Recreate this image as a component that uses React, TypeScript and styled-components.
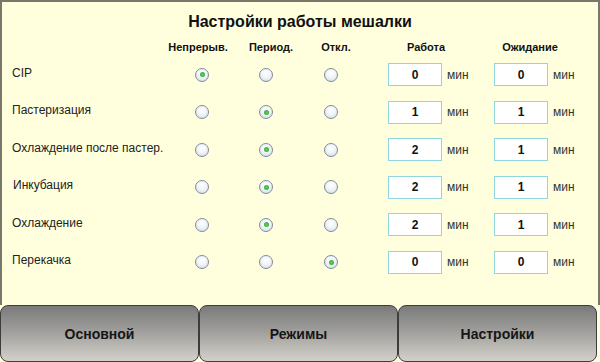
import React from "react";
import styled, { createGlobalStyle } from "styled-components";

const Global = createGlobalStyle`
  html, body { margin: 0; padding: 0; background: #ffffdd; }
  body { font-family: Arial, "Liberation Sans", sans-serif; }
`;

const Frame = styled.div`
  width: 600px;
  height: 362px;
  display: flex;
  flex-direction: column;
  background: #ffffdd;
  overflow: hidden;
`;

const Panel = styled.div`
  height: 305px;
  box-sizing: border-box;
  border: 2px solid #77776a;
  border-bottom: none;
  display: flex;
  flex-direction: column;
`;

const Title = styled.div`
  height: 36px;
  padding-top: 11px;
  box-sizing: border-box;
  text-align: center;
  font-weight: bold;
  font-size: 16px;
  color: #111;
  line-height: 18px;
`;

const Grid = styled.div`
  display: grid;
  grid-template-columns: 168px 62px 68px 60px 28px 54px 52px 54px 1fr;
  grid-template-rows: 17px repeat(6, 37.5px);
  align-items: center;
`;

const Head = styled.div<{ $col: number; $span?: number; $shift?: number }>`
  grid-column: ${(p) => p.$col} / span ${(p) => p.$span ?? 1};
  grid-row: 1;
  text-align: center;
  font-weight: bold;
  font-size: 11px;
  color: #111;
  white-space: nowrap;
  transform: translateX(${(p) => p.$shift ?? 0}px);
`;

const Label = styled.div<{ $row: number; $indent?: number }>`
  grid-column: 1;
  grid-row: ${(p) => p.$row};
  padding-left: ${(p) => 10 + (p.$indent ?? 0)}px;
  font-size: 12px;
  color: #222;
  white-space: nowrap;
  transform: translateY(-1px);
`;

const RadioCell = styled.div<{ $row: number; $col: number }>`
  grid-column: ${(p) => p.$col};
  grid-row: ${(p) => p.$row};
  display: flex;
  justify-content: center;
  transform: translate(${(p) => (p.$col === 2 ? 1 : p.$col === 4 ? 1 : 0)}px, 1px);
`;

const Radio = styled.div<{ $on: boolean }>`
  width: 14px;
  height: 14px;
  box-sizing: border-box;
  border-radius: 50%;
  border: 1.5px solid #7d8c9c;
  background: radial-gradient(circle at 50% 35%, #ffffff 0%, #f1f4f8 45%, #cfd9e4 100%);
  display: flex;
  align-items: center;
  justify-content: center;
  &::after {
    content: "";
    width: 5px;
    height: 5px;
    border-radius: 50%;
    background: radial-gradient(circle, #5fd35f 0%, #2a9e2a 100%);
    display: ${(p) => (p.$on ? "block" : "none")};
  }
`;

const Box = styled.div<{ $row: number; $col: number }>`
  grid-column: ${(p) => p.$col};
  grid-row: ${(p) => p.$row};
  height: 23px;
  box-sizing: border-box;
  border: 1px solid #8fd6df;
  background: #ffffff;
  display: flex;
  align-items: center;
  justify-content: center;
  font-weight: bold;
  font-size: 12px;
  color: #111;
  transform: translateY(1px);
`;

const Unit = styled.div<{ $row: number; $col: number }>`
  grid-column: ${(p) => p.$col};
  grid-row: ${(p) => p.$row};
  padding-left: 5px;
  font-size: 12px;
  color: #333;
  transform: translateY(1px);
`;

const Footer = styled.div`
  display: grid;
  grid-template-columns: 199px 199px 199px;
  height: 57px;
  padding-right: 3px;
`;

const NavButton = styled.div`
  box-sizing: border-box;
  border: 1.5px solid #3c3c3c;
  border-radius: 8px;
  background: linear-gradient(to bottom, #7a7a7a 0%, #a3a29f 50%, #d4d1c9 100%);
  display: flex;
  align-items: center;
  justify-content: center;
  font-weight: bold;
  font-size: 14px;
  color: #161616;
`;

type Row = { label: string; indent?: number; sel: number; work: string; wait: string };

const rows: Row[] = [
  { label: "CIP", sel: 0, work: "0", wait: "0" },
  { label: "Пастеризация", sel: 1, work: "1", wait: "1" },
  { label: "Охлаждение после пастер.", sel: 1, work: "2", wait: "1" },
  { label: "Инкубация", indent: 1, sel: 1, work: "2", wait: "1" },
  { label: "Охлаждение", sel: 1, work: "2", wait: "1" },
  { label: "Перекачка", sel: 2, work: "0", wait: "0" },
];

export default function App() {
  return (
    <>
      <Global />
      <Frame>
        <Panel>
          <Title>Настройки работы мешалки</Title>
          <Grid>
            <Head $col={2} $shift={-3}>Непрерыв.</Head>
            <Head $col={3} $shift={5}>Период.</Head>
            <Head $col={4} $shift={6}>Откл.</Head>
            <Head $col={6} $span={2} $shift={-15}>Работа</Head>
            <Head $col={8} $span={2} $shift={-16}>Ожидание</Head>
            {rows.map((r, i) => {
              const row = i + 2;
              return (
                <React.Fragment key={r.label}>
                  <Label $row={row} $indent={r.indent}>{r.label}</Label>
                  {[0, 1, 2].map((c) => (
                    <RadioCell key={c} $row={row} $col={c + 2}>
                      <Radio $on={r.sel === c} />
                    </RadioCell>
                  ))}
                  <Box $row={row} $col={6}>{r.work}</Box>
                  <Unit $row={row} $col={7}>мин</Unit>
                  <Box $row={row} $col={8}>{r.wait}</Box>
                  <Unit $row={row} $col={9}>мин</Unit>
                </React.Fragment>
              );
            })}
          </Grid>
        </Panel>
        <Footer>
          <NavButton>Основной</NavButton>
          <NavButton>Режимы</NavButton>
          <NavButton>Настройки</NavButton>
        </Footer>
      </Frame>
    </>
  );
}
